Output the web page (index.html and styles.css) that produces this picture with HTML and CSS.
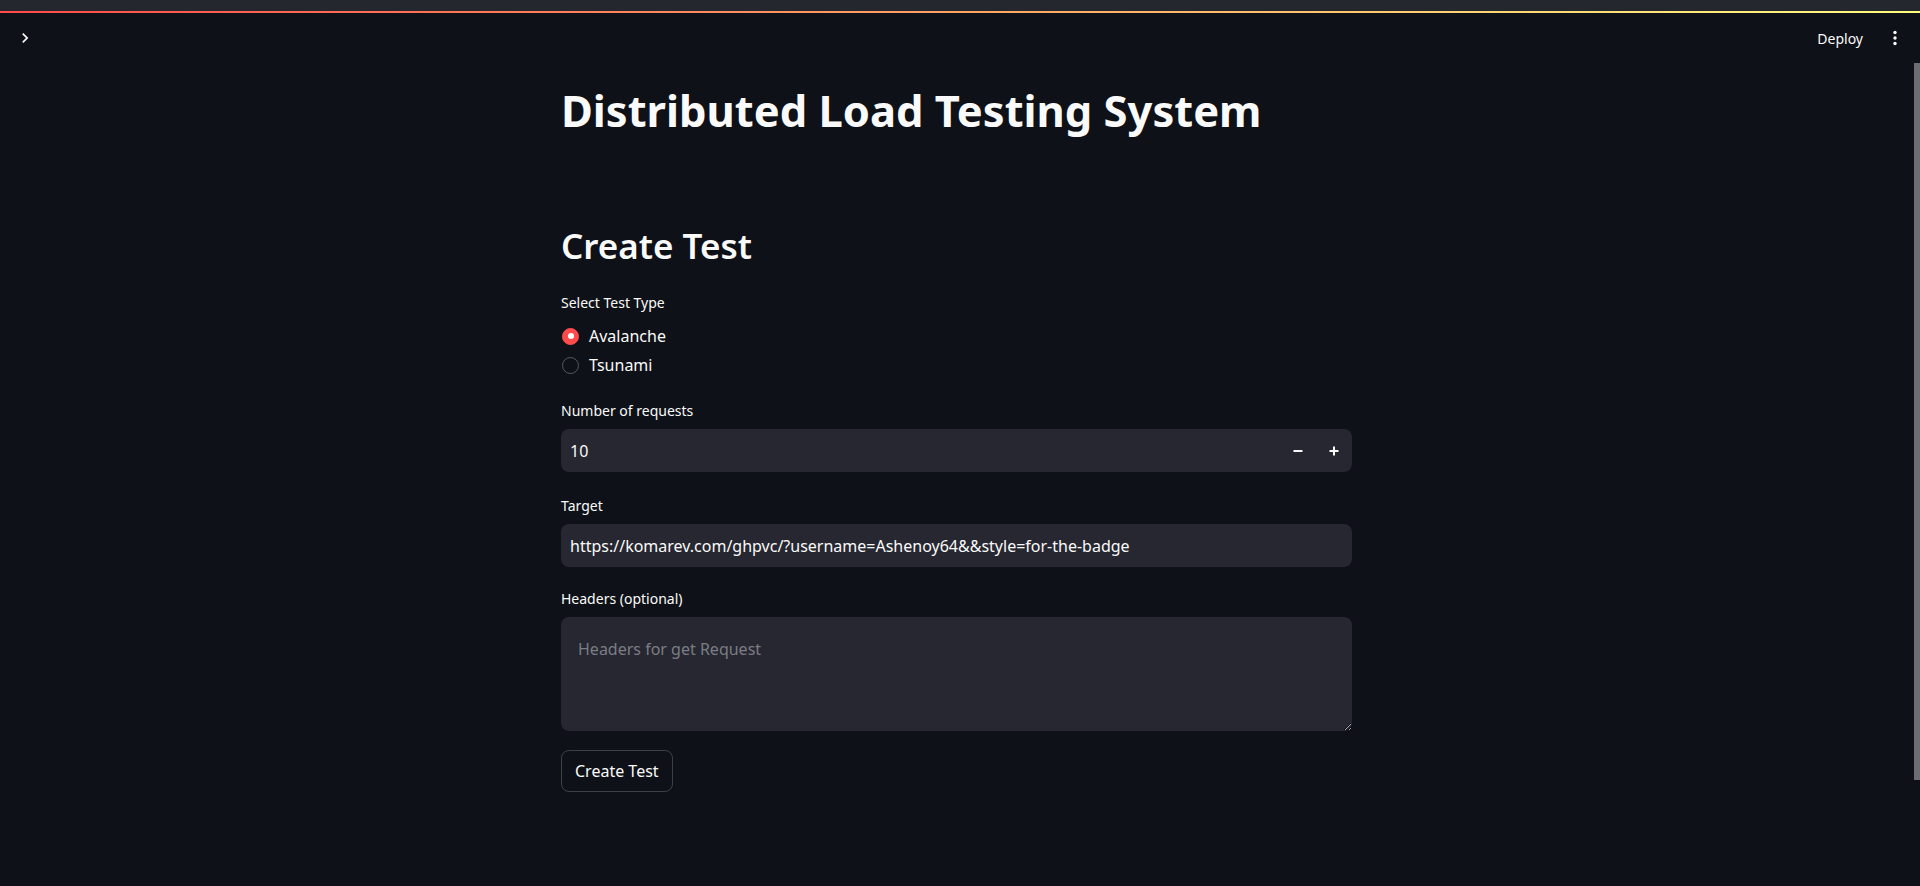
FILE: index.html
```html
<!DOCTYPE html>
<html lang="en">
<head>
<meta charset="utf-8">
<title>Distributed Load Testing System</title>
<link rel="stylesheet" href="styles.css">
</head>
<body>
<div class="app">
  <div class="chrome"></div>
  <div class="decoration"></div>
  <header class="header">
    <button class="icon-btn sidebar-toggle" aria-label="Open sidebar">
      <svg width="20" height="20" viewBox="0 0 24 24"><path fill="#fafafa" d="M10 6L8.59 7.41 13.17 12l-4.58 4.59L10 18l6-6z"/></svg>
    </button>
    <div class="header-actions">
      <span class="deploy">Deploy</span>
      <button class="icon-btn menu" aria-label="Main menu">
        <svg width="24" height="24" viewBox="0 0 24 24"><circle cx="12" cy="6.5" r="1.7" fill="#fafafa"/><circle cx="12" cy="12" r="1.7" fill="#fafafa"/><circle cx="12" cy="17.5" r="1.7" fill="#fafafa"/></svg>
      </button>
    </div>
  </header>
  <main class="main">
    <div class="block">
      <h1 class="title">Distributed Load Testing System</h1>
      <h2 class="subtitle">Create Test</h2>

      <div class="field field-radio">
        <div class="field-label">Select Test Type</div>
        <div class="radio-group">
          <div class="radio"><span class="radio-circle checked"></span><span class="radio-text">Avalanche</span></div>
          <div class="radio"><span class="radio-circle"></span><span class="radio-text">Tsunami</span></div>
        </div>
      </div>

      <div class="field field-number">
        <div class="field-label">Number of requests</div>
        <div class="control number">
          <input class="text-input" type="text" value="10">
          <button class="step" aria-label="Decrement"><svg width="10" height="10" viewBox="0 0 10 10"><rect x="0.5" y="4" width="9" height="2" fill="#fafafa"/></svg></button>
          <button class="step" aria-label="Increment"><svg width="10" height="10" viewBox="0 0 10 10"><rect x="0.5" y="4" width="9" height="2" fill="#fafafa"/><rect x="4" y="0.5" width="2" height="9" fill="#fafafa"/></svg></button>
        </div>
      </div>

      <div class="field field-target">
        <div class="field-label">Target</div>
        <div class="control">
          <input class="text-input" type="text" value="https://komarev.com/ghpvc/?username=Ashenoy64&amp;&amp;style=for-the-badge">
        </div>
      </div>

      <div class="field field-headers">
        <div class="field-label">Headers (optional)</div>
        <textarea class="textarea" placeholder="Headers for get Request"></textarea>
      </div>

      <button class="primary-btn">Create Test</button>
    </div>
  </main>
  <div class="scroll-thumb"></div>
</div>
</body>
</html>
```

FILE: styles.css
```css
* { box-sizing: border-box; }
html, body { margin: 0; padding: 0; }
body {
  background: #0e1117;
  color: #fafafa;
  font-family: "Noto Sans", "Open Sans", sans-serif;
  overflow: hidden;
}
.app { position: relative; width: 1920px; height: 886px; }
.chrome { height: 11px; background: #24282e; }
.decoration { height: 2px; background: linear-gradient(90deg, #ff4b4b, #fffd80); }
.header {
  height: 50px;
  display: flex;
  align-items: center;
  justify-content: space-between;
  padding: 0 13px 0 15px;
}
.icon-btn {
  background: none; border: 0; padding: 0; margin: 0;
  display: flex; align-items: center; justify-content: center;
  cursor: pointer;
}
.header-actions { display: flex; align-items: center; gap: 20px; }
.deploy { font-size: 14px; color: #fafafa; }
.main { display: flex; justify-content: center; padding-right: 7px; }
.block { width: 791px; display: flex; flex-direction: column; align-items: flex-start; padding-bottom: 80px; }
.title {
  margin: 21px 0 0; font-size: 43.5px; line-height: 52px; font-weight: 700; color: #fafafa;
}
.subtitle {
  margin: 88px 0 0; font-size: 35px; line-height: 44px; font-weight: 600; color: #fafafa;
}
.field { width: 100%; display: flex; flex-direction: column; margin-top: 23px; }
.field-radio { margin-top: 25px; }
.field-number { margin-top: 24px; }
.field-target { margin-top: 24px; }
.field-headers { margin-top: 22px; }
.field-label { font-size: 14px; line-height: 20px; margin-bottom: 8px; }
.field-radio .field-label { margin-bottom: 11px; }
.radio-group { display: flex; flex-direction: column; gap: 5px; }
.radio { display: flex; align-items: center; height: 24px; gap: 10px; padding-left: 1px; }
.radio-circle {
  width: 17px; height: 17px; border-radius: 50%;
  border: 1px solid #55585f; position: relative;
}
.radio-circle.checked { background: #ff4b4b; border-color: #ff4b4b; }
.radio-circle.checked::after {
  content: ""; position: absolute; left: 50%; top: 50%;
  width: 6px; height: 6px; margin: -3px 0 0 -3px; border-radius: 50%; background: #fff;
}
.radio-text { font-size: 16px; }
.control {
  display: flex; align-items: center; height: 43px;
  background: #262730; border-radius: 8px;
}
.text-input {
  flex: 1; min-width: 0; height: 100%;
  background: transparent; border: 0; outline: none;
  color: #fafafa; font: 16px "Noto Sans", "Open Sans", sans-serif;
  padding: 0 9px;
}
.step {
  width: 36px; height: 100%; background: none; border: 0; padding: 0;
  display: flex; align-items: center; justify-content: center;
}
.textarea {
  display: block; width: 100%; height: 114px;
  background: #262730; border: 0; border-radius: 8px; outline: none;
  color: #fafafa; font: 16px/24px "Noto Sans", "Open Sans", sans-serif;
  padding: 20px 17px; resize: vertical; color-scheme: dark;
}
.textarea::placeholder { color: #7b7d84; }
.primary-btn {
  margin-top: 19px; height: 42px; padding: 0 13px;
  background: transparent; color: #fafafa;
  border: 1px solid rgba(250,250,250,0.2); border-radius: 8px;
  font: 16px "Noto Sans", "Open Sans", sans-serif;
}
.scroll-thumb {
  position: absolute; right: 0; top: 63px; width: 6px; height: 717px;
  background: #6b6d72;
}
```
